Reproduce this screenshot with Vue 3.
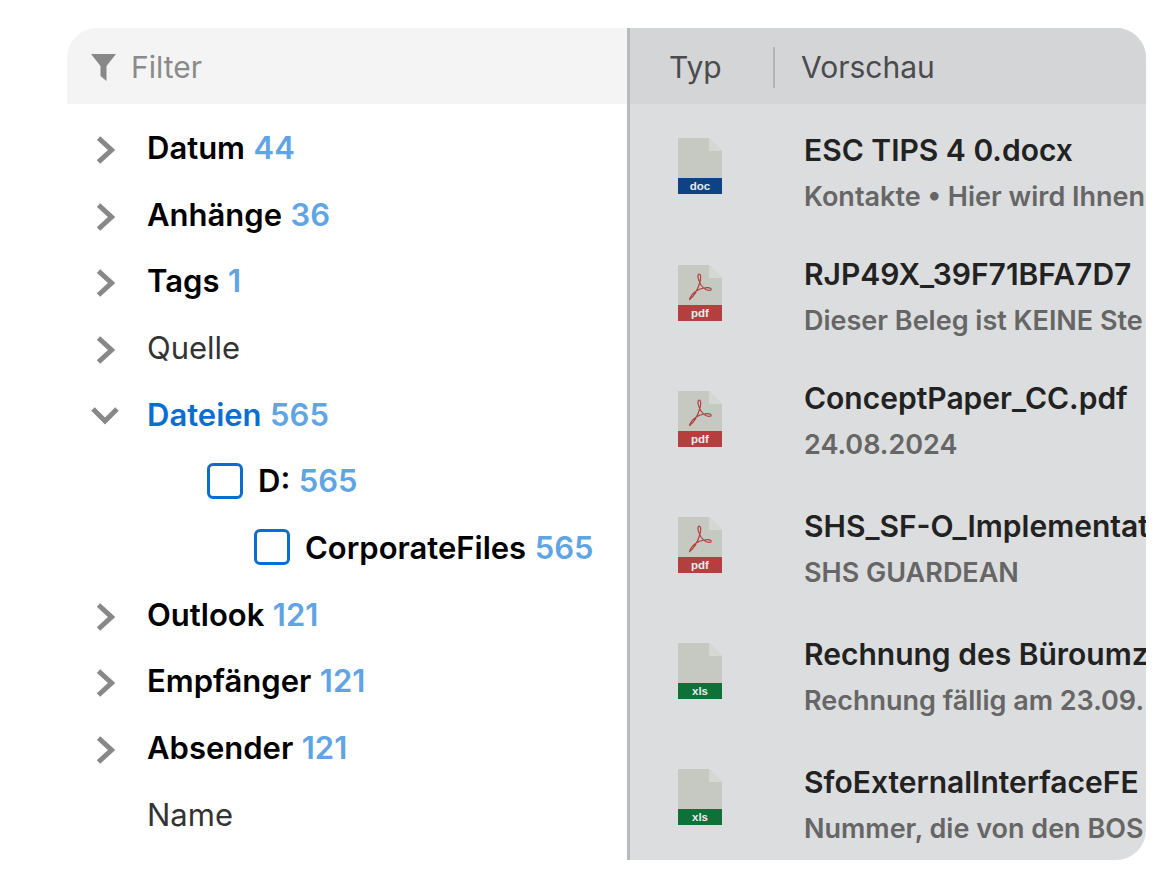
<script setup>
const facets = [
  { label: 'Datum', count: 44, arrow: 'right' },
  { label: 'Anhänge', count: 36, arrow: 'right' },
  { label: 'Tags', count: 1, arrow: 'right' },
  { label: 'Quelle', arrow: 'right', plain: true },
  { label: 'Dateien', count: 565, arrow: 'down', active: true },
  { label: 'D:', count: 565, level: 1 },
  { label: 'CorporateFiles', count: 565, level: 2 },
  { label: 'Outlook', count: 121, arrow: 'right' },
  { label: 'Empfänger', count: 121, arrow: 'right' },
  { label: 'Absender', count: 121, arrow: 'right' },
  { label: 'Name', plain: true },
];

// names and previews are already cut the way the list shows them
const files = [
  { type: 'doc', name: 'ESC TIPS 4 0.docx', sub: 'Kontakte • Hier wird Ihnen' },
  { type: 'pdf', name: 'RJP49X_39F71BFA7D7', sub: 'Dieser Beleg ist KEINE Ste' },
  { type: 'pdf', name: 'ConceptPaper_CC.pdf', sub: '24.08.2024', tall: true },
  { type: 'pdf', name: 'SHS_SF-O_Implementat', sub: 'SHS GUARDEAN', tall: true },
  { type: 'xls', name: 'Rechnung des Büroumz', sub: 'Rechnung fällig am 23.09.', tall: true },
  { type: 'xls', name: 'SfoExternalInterfaceFE', sub: 'Nummer, die von den BOS' },
];

const bannerColors = { doc: '#0b4383', pdf: '#b3403f', xls: '#0f7038' };
</script>

<template>
  <div class="page">
    <div class="panel">
      <section class="filters">
        <header class="filter-head">
          <svg class="funnel" width="25" height="27" viewBox="0 0 25 27">
            <path d="M0 0H25L15.5 12V27L9.5 22V12Z" fill="#888" />
          </svg>
          <span>Filter</span>
        </header>
        <ul class="facets">
          <li v-for="f in facets" :key="f.label" class="facet" :class="f.level ? 'level-' + f.level : ''">
            <span v-if="!f.level" class="arrow">
              <svg v-if="f.arrow === 'right'" class="chevron" width="18" height="28" viewBox="0 0 18 28">
                <path d="M1.5 2L14.5 14L1.5 26" fill="none" stroke="#888" stroke-width="5" />
              </svg>
              <svg v-else-if="f.arrow === 'down'" class="chevron-down" width="28" height="18" viewBox="0 0 28 18">
                <path d="M2 2L14 14L26 2" fill="none" stroke="#888" stroke-width="5" />
              </svg>
            </span>
            <span v-else class="check"></span>
            <span class="label" :class="{ plain: f.plain, active: f.active }">{{ f.label }}</span>
            <span v-if="f.count" class="count">{{ f.count }}</span>
          </li>
        </ul>
      </section>

      <section class="results">
        <header class="results-head">
          <span class="col-type">Typ</span>
          <span class="col-sep"></span>
          <span>Vorschau</span>
        </header>
        <div class="results-body">
          <div class="icons">
            <svg v-for="(file, i) in files" :key="i" class="file-icon" width="44" height="56" viewBox="0 0 44 56">
              <path d="M0 0H31L44 13V40H0Z" fill="#c6c8c2" />
              <path d="M31 0L44 13H31Z" fill="#d6d7d2" />
              <rect y="40" width="44" height="16" :fill="bannerColors[file.type]" />
              <path
                v-if="file.type === 'pdf'"
                d="M12 34C16 31 20 24 22 17C23 13 23 9 21 9C19 10 20 15 23 20C26 24 30 26 33 25C34 23 30 22 26 23C20 24 14 28 12 33C11 35 12 35 12 34Z"
                fill="none"
                stroke="#b3403f"
                stroke-width="1.2"
              />
              <text x="22" y="52" text-anchor="middle" class="file-type">{{ file.type }}</text>
            </svg>
          </div>
          <div class="texts">
            <div v-for="(file, i) in files" :key="i" class="file" :class="{ tall: file.tall }">
              <div class="file-name">{{ file.name }}</div>
              <div class="file-sub">{{ file.sub }}</div>
            </div>
          </div>
        </div>
      </section>
    </div>
  </div>
</template>

<style scoped>
.page {
  padding: 28px 30px 28px 67px;
  font-family: Inter, "Liberation Sans", sans-serif;
}

.panel {
  display: flex;
  height: 832px;
  border-radius: 30px;
  overflow: hidden;
}

.filters {
  width: 560px;
  flex-shrink: 0;
  background: #fff;
}

.filter-head {
  display: flex;
  align-items: center;
  gap: 15px;
  box-sizing: border-box;
  height: 76px;
  padding: 2px 0 0 24px;
  background: #f4f4f4;
  color: #8a8a8a;
  font-size: 30px;
}

.funnel {
  margin-top: 1px;
}

.facets {
  list-style: none;
  margin: 0;
  padding: 10px 0 0;
}

.facet {
  display: flex;
  align-items: center;
  height: 66.7px;
  font-size: 31px;
  font-weight: 600;
  color: #000;
}

.level-1 {
  padding-left: 140px;
}

.level-2 {
  padding-left: 187px;
}

.arrow {
  display: flex;
  justify-content: center;
  box-sizing: border-box;
  width: 81px;
  margin-left: -1px;
  padding-right: 1px;
}

.chevron {
  margin-top: 5px;
}

.chevron-down {
  margin: 4px 0 0 -2px;
}

.check {
  width: 36px;
  height: 36px;
  box-sizing: border-box;
  margin-right: 15px;
  border: 3px solid #0a6ed1;
  border-radius: 6px;
}

.label.plain {
  font-weight: 400;
  color: #333;
}

.label.active {
  color: #0a6ed1;
}

.count {
  margin-left: 8.5px;
  color: #5fa4e3;
}

.results {
  flex: 1;
  min-width: 0;
  border-left: 3px solid #b9babc;
  background: #dcddde;
}

.results-head {
  display: flex;
  align-items: center;
  box-sizing: border-box;
  height: 76px;
  padding: 2px 0 0 39px;
  background: #d4d5d7;
  color: #4b4b4d;
  font-size: 30px;
}

.col-type {
  width: 104px;
}

.col-sep {
  width: 2px;
  height: 41px;
  margin-right: 26px;
  background: #b4b5b7;
}

.results-body {
  display: flex;
  overflow: hidden;
}

.icons {
  display: flex;
  flex-direction: column;
  gap: 70.2px;
  flex-shrink: 0;
  width: 174px;
  padding: 34.4px 0 0 48px;
  box-sizing: border-box;
}

.file-icon {
  display: block;
}

.file-type {
  font-size: 11.5px;
  font-weight: 700;
  fill: #e8ecf0;
  font-family: "Liberation Sans", sans-serif;
}

.texts {
  flex: 1;
  min-width: 0;
  padding: 26px 0 0;
}

.file {
  height: 124px;
  white-space: nowrap;
}

.file.tall {
  height: 128px;
}

.file-name {
  font-size: 30px;
  font-weight: 600;
  line-height: 40px;
  color: #222;
}

.file-sub {
  margin-top: 7px;
  font-size: 27px;
  font-weight: 600;
  line-height: 40px;
  color: #666;
}
</style>
